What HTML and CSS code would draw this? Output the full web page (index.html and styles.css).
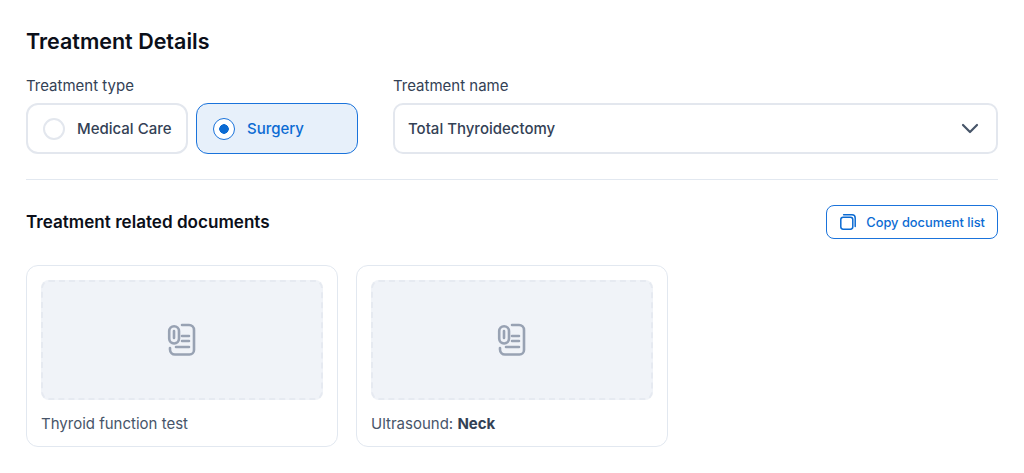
FILE: index.html
```html
<!DOCTYPE html>
<html lang="en">
<head>
  <title>Treatment Details</title>
  <meta charset="utf-8">
  <meta name="viewport" content="width=device-width, initial-scale=1">
  <link rel="stylesheet" href="styles.css">
</head>
<body>
  <main class="container">
    <h2>Treatment Details</h2>
    <div class="fields">
      <div class="field-type">
        <p class="label">Treatment type</p>
        <div class="options">
          <div class="option"><span class="radio"></span>Medical Care</div>
          <div class="option option-active"><span class="radio"></span>Surgery</div>
        </div>
      </div>
      <div class="field-name">
        <p class="label">Treatment name</p>
        <div class="select">
          <span>Total Thyroidectomy</span>
          <svg width="24" height="24" viewBox="0 0 24 24" fill="none" stroke="#475569" stroke-width="2.2" stroke-linecap="round" stroke-linejoin="round"><path d="M5 8l7 7 7-7"/></svg>
        </div>
      </div>
    </div>
    <div class="section-head">
      <h3>Treatment related documents</h3>
      <button type="button" class="button-copy">
        <svg width="16" height="16" viewBox="0 0 16 16" fill="none" stroke="#0B6BD3" stroke-width="1.5" stroke-linecap="round" stroke-linejoin="round"><rect x="0.8" y="3.2" width="12" height="12" rx="2.4"/><path d="M3.600 0.800h8.400a3.200 3.200 0 0 1 3.200 3.200v8.400"/></svg>
        Copy document list
      </button>
    </div>
    <div class="cards">
      <article class="card">
        <div class="thumb">
          <svg width="30" height="34" viewBox="0 0 30 34" fill="none" stroke="#98A2B3" stroke-width="2.6" stroke-linecap="round" stroke-linejoin="round"><path d="M15 2h7a5 5 0 0 1 5 5v20a4.500 4.500 0 0 1-4.500 4.500H8a5 5 0 0 1-5-5V25"/><path d="M12 8.100a4.900 4.900 0 0 0-9.800 0v7.500a4.900 4.900 0 0 0 9.800 0V8.100"/><path d="M7 8v7M15 13h7M15 18h7M9 24h13"/></svg>
        </div>
        <p class="card-title">Thyroid function test</p>
      </article>
      <article class="card">
        <div class="thumb">
          <svg width="30" height="34" viewBox="0 0 30 34" fill="none" stroke="#98A2B3" stroke-width="2.6" stroke-linecap="round" stroke-linejoin="round"><path d="M15 2h7a5 5 0 0 1 5 5v20a4.500 4.500 0 0 1-4.500 4.500H8a5 5 0 0 1-5-5V25"/><path d="M12 8.100a4.900 4.900 0 0 0-9.800 0v7.500a4.900 4.900 0 0 0 9.800 0V8.100"/><path d="M7 8v7M15 13h7M15 18h7M9 24h13"/></svg>
        </div>
        <p class="card-title">Ultrasound: <b>Neck</b></p>
      </article>
    </div>
  </main>
</body>
</html>
```
FILE: styles.css
```css
*, *::before, *::after {
  margin: 0;
  padding: 0;
  box-sizing: border-box;
}

body {
  background-color: #FFFFFF;
  color: #334155;
  font-family: "Inter", sans-serif;
  overflow: hidden;
}

.container {
  padding: 28px 26px 0;
}

h2 {
  color: #0B0F19;
  font-size: 21.500px;
  font-weight: 600;
  line-height: 27px;
}

h3 {
  color: #0B0F19;
  font-size: 17.100px;
  font-weight: 600;
  line-height: 24px;
}

.label {
  margin-bottom: 7px;
  font-size: 15px;
  line-height: 21px;
}

.fields {
  display: flex;
  gap: 35px;
  margin-top: 20px;
  padding-bottom: 25px;
  border-bottom: 1px solid #E2E8F0;
}

.field-name {
  flex: 1;
}

.options {
  display: flex;
  gap: 8px;
}

.option {
  display: flex;
  align-items: center;
  gap: 12px;
  width: 162px;
  height: 51px;
  padding-left: 15px;
  border: 2px solid #E3E7EE;
  border-radius: 12px;
  font-size: 15px;
  font-weight: 450;
}

.option-active {
  border: 1px solid #1A73DB;
  padding-left: 16px;
  background-color: #E7F0FA;
  color: #0B6BD3;
}

.radio {
  width: 22px;
  height: 22px;
  border: 2px solid #E3E7EE;
  border-radius: 50%;
  background-color: #FFFFFF;
}

.option-active .radio {
  border: 1.5px solid #1A73DB;
  background: radial-gradient(circle, #0B6BD3 0 4.500px, #FFFFFF 5px);
}

.select {
  display: flex;
  align-items: center;
  justify-content: space-between;
  height: 51px;
  padding: 0 14px 0 13px;
  border: 2px solid #E3E7EE;
  border-radius: 10px;
  font-size: 15px;
  font-weight: 450;
}

.section-head {
  display: flex;
  align-items: center;
  justify-content: space-between;
  margin-top: 25px;
}

.button-copy {
  display: flex;
  align-items: center;
  gap: 10px;
  height: 34px;
  padding: 0 12px 0 13px;
  border: 1px solid #1A73DB;
  border-radius: 8px;
  background-color: #FFFFFF;
  color: #0B6BD3;
  font-family: inherit;
  font-size: 12.850px;
  font-weight: 450;
}

.cards {
  display: flex;
  gap: 18px;
  margin-top: 26px;
}

.card {
  width: 312px;
  height: 182px;
  padding: 14px;
  border: 1px solid #E2E8F0;
  border-radius: 12px;
}

.thumb {
  display: flex;
  align-items: center;
  justify-content: center;
  height: 120px;
  border: 2px dashed #E6EAF1;
  border-radius: 8px;
  background-color: #F0F3F8;
}

.card-title {
  margin-top: 14px;
  color: #475569;
  font-size: 15px;
  line-height: 20px;
}

.card-title b {
  color: #334155;
  font-weight: 700;
}
```
